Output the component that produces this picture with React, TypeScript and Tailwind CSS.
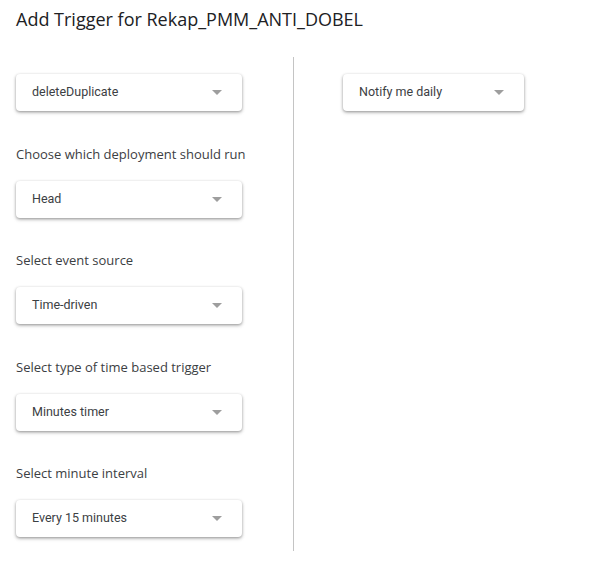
const Select = ({ value, className = '' }: { value: string; className?: string }) => {
  return (
    <div
      className={`flex h-[37px] items-center justify-between rounded-[4px] bg-white pl-[16px] pr-[20px] text-[12.5px] text-[#3c4043] shadow-[0_1px_3px_rgba(0,0,0,0.35),0_2px_4px_rgba(0,0,0,0.12)] ${className}`}
      style={{ fontFamily: 'Roboto, Arial, sans-serif' }}
    >
      <span>{value}</span>
      <span className="h-0 w-0 border-x-[5px] border-t-[5px] border-x-transparent border-t-[#9e9e9e]" />
    </div>
  );
};

const Field = ({ label, value }: { label: string; value: string }) => {
  return (
    <div className="mt-[34.5px] flex flex-col">
      <label className="text-[13px] leading-[16px] text-[#3c4043]">{label}</label>
      <Select value={value} className="mt-[19px] w-[226px]" />
    </div>
  );
};

const App = () => {
  return (
    <div
      className="h-[563px] w-[603px] bg-white"
      style={{ fontFamily: '"Open Sans", Roboto, Arial, sans-serif' }}
    >
      <h1 className="pl-4 pt-[7px] text-[18px] leading-[24px] text-[#202124]">
        Add Trigger for Rekap_PMM_ANTI_DOBEL
      </h1>
      <div className="mt-[26px] flex">
        <div className="w-[294px] border-r border-[#c4c4c4] pb-[14px] pl-4">
          <Select value="deleteDuplicate" className="mt-[17px] w-[226px]" />
          <Field label="Choose which deployment should run" value="Head" />
          <Field label="Select event source" value="Time-driven" />
          <Field label="Select type of time based trigger" value="Minutes timer" />
          <Field label="Select minute interval" value="Every 15 minutes" />
        </div>
        <div className="pl-[49px]">
          <Select value="Notify me daily" className="mt-[17px] w-[181px]" />
        </div>
      </div>
    </div>
  );
};

export default App;
